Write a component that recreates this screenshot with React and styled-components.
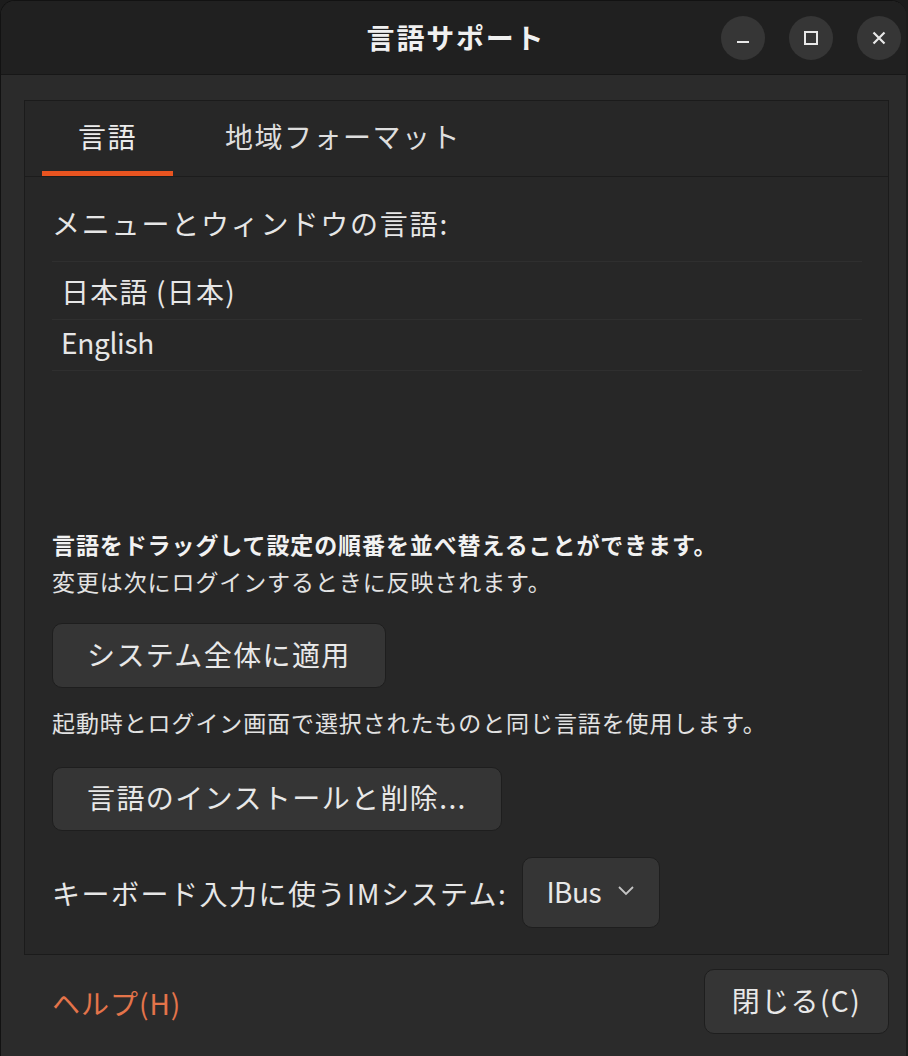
import styled, { createGlobalStyle } from "styled-components";

const GlobalStyle = createGlobalStyle`
  html, body {
    margin: 0;
    padding: 0;
    background: #1c1c1c;
  }
  body {
    font-family: "Noto Sans CJK JP", "Noto Sans", sans-serif;
    color: #e6e6e6;
  }
  * { box-sizing: border-box; }
`;

const Window = styled.div`
  width: 906px;
  height: 1056px;
  display: flex;
  flex-direction: column;
  background: #2b2b2b;
  border-top: 1px solid #121212;
  border-left: 1px solid #121212;
  border-radius: 15px 15px 0 0;
  overflow: hidden;
`;

const TitleBar = styled.div`
  height: 74px;
  flex: none;
  display: grid;
  grid-template-columns: 1fr auto 1fr;
  align-items: center;
  background: #202020;
  border-bottom: 1px solid #171717;
  padding-right: 5px;
`;

const Title = styled.div`
  grid-column: 2;
  font-size: 28px;
  font-weight: 700;
  letter-spacing: 1.8px;
  color: #f0f0f0;
  padding: 0 0 2px 10px;
`;

const Controls = styled.div`
  grid-column: 3;
  justify-self: end;
  display: flex;
  gap: 24px;
`;

const CircleButton = styled.button`
  width: 44px;
  height: 44px;
  border-radius: 50%;
  border: none;
  background: #363636;
  display: flex;
  align-items: center;
  justify-content: center;
  padding: 0;
  color: #e8e8e8;
`;

const Body = styled.div`
  flex: 1;
  display: flex;
  flex-direction: column;
  padding: 25px 17px 0 23px;
`;

const Frame = styled.div`
  height: 855px;
  display: flex;
  flex-direction: column;
  background: #272727;
  border: 1px solid #1b1b1b;
`;

const TabBar = styled.div`
  height: 76px;
  flex: none;
  display: flex;
  gap: 16px;
  padding-left: 17px;
  border-bottom: 1px solid #1c1c1c;
`;

const Tab = styled.div`
  position: relative;
  display: flex;
  align-items: center;
  padding: 0 36px 6px;
  font-size: 28px;
  letter-spacing: 1.5px;
  color: ${(p) => (p.$active ? "#ececec" : "#dedede")};

  &::after {
    content: "";
    position: absolute;
    left: 0;
    right: 0;
    bottom: 0;
    height: 5px;
    background: ${(p) => (p.$active ? "#e95420" : "transparent")};
  }
`;

const Content = styled.div`
  flex: 1;
  display: flex;
  flex-direction: column;
  padding: 0 26px 26px 27px;
`;

const Label = styled.div`
  font-size: 28px;
  letter-spacing: 1.8px;
  line-height: 34px;
  margin-top: 29px;
`;

const LangList = styled.div`
  margin-top: 21px;
  padding-top: 7px;
  border-top: 1px solid #2f2f2f;
`;

const LangRow = styled.div`
  height: 51px;
  display: flex;
  align-items: center;
  padding: 0 0 6px 9px;
  font-size: 28px;
  letter-spacing: ${(p) => (p.$latin ? "-0.3px" : "1.2px")};
  border-bottom: 1px solid #2f2f2f;
`;

const Lower = styled.div`
  margin-top: auto;
  display: flex;
  flex-direction: column;
  align-items: flex-start;
`;

const Note = styled.div`
  font-size: 23px;
  letter-spacing: 0.9px;
  line-height: 37px;
  margin-top: ${(p) => p.$mt || 0}px;
  font-weight: ${(p) => (p.$bold ? 700 : 400)};
  color: ${(p) => (p.$bold ? "#f2f2f2" : "#e2e2e2")};
`;

const Button = styled.button`
  font-family: inherit;
  font-size: 28px;
  letter-spacing: 1.4px;
  color: #e8e8e8;
  background: #353535;
  border: 1px solid #1e1e1e;
  border-radius: 10px;
  height: ${(p) => p.$h || 65}px;
  padding: 0 ${(p) => p.$px || 34}px 4px;
  margin-top: ${(p) => p.$mt || 0}px;
  display: flex;
  align-items: center;
`;

const ImRow = styled.div`
  margin-top: 26px;
  display: flex;
  align-items: center;
  gap: 15px;
  font-size: 28px;
  letter-spacing: 1.5px;
`;

const Dropdown = styled.button`
  font-family: inherit;
  width: 138px;
  height: 71px;
  display: flex;
  align-items: center;
  gap: 16px;
  padding: 0 0 4px 23px;
  font-size: 28px;
  letter-spacing: -0.5px;
  color: #e8e8e8;
  background: #353535;
  border: 1px solid #1e1e1e;
  border-radius: 10px;
`;

const Footer = styled.div`
  flex: 1;
  display: flex;
  justify-content: space-between;
  align-items: flex-start;
  padding: 14px 0 0 28px;
`;

const HelpLink = styled.div`
  font-size: 28px;
  letter-spacing: 1px;
  color: #e4744a;
  margin-top: 14px;
`;

export default function App() {
  return (
    <>
      <GlobalStyle />
      <Window>
        <TitleBar>
          <Title>言語サポート</Title>
          <Controls>
            <CircleButton aria-label="最小化">
              <svg width="16" height="16" viewBox="0 0 16 16">
                <path d="M2 12h12" stroke="currentColor" strokeWidth="2" />
              </svg>
            </CircleButton>
            <CircleButton aria-label="最大化">
              <svg width="16" height="16" viewBox="0 0 16 16">
                <rect x="2" y="2" width="12" height="12" fill="none" stroke="currentColor" strokeWidth="2" />
              </svg>
            </CircleButton>
            <CircleButton aria-label="閉じる">
              <svg width="16" height="16" viewBox="0 0 16 16">
                <path d="M2.5 2.5l11 11M13.5 2.5l-11 11" stroke="currentColor" strokeWidth="2.2" />
              </svg>
            </CircleButton>
          </Controls>
        </TitleBar>
        <Body>
          <Frame>
            <TabBar>
              <Tab $active>言語</Tab>
              <Tab>地域フォーマット</Tab>
            </TabBar>
            <Content>
              <Label>メニューとウィンドウの言語:</Label>
              <LangList>
                <LangRow>日本語 (日本)</LangRow>
                <LangRow $latin>English</LangRow>
              </LangList>
              <Lower>
                <Note $bold>言語をドラッグして設定の順番を並べ替えることができます。</Note>
                <Note>変更は次にログインするときに反映されます。</Note>
                <Button $mt={23}>システム全体に適用</Button>
                <Note $mt={16}>起動時とログイン画面で選択されたものと同じ言語を使用します。</Note>
                <Button $mt={26} $h={64}>言語のインストールと削除...</Button>
                <ImRow>
                  キーボード入力に使うIMシステム:
                  <Dropdown>
                    IBus
                    <svg width="18" height="11" viewBox="0 0 18 11">
                      <path d="M2 2l7 7 7-7" fill="none" stroke="#c4c4c4" strokeWidth="1.8" />
                    </svg>
                  </Dropdown>
                </ImRow>
              </Lower>
            </Content>
          </Frame>
          <Footer>
            <HelpLink>ヘルプ(H)</HelpLink>
            <Button $px={27}>閉じる(C)</Button>
          </Footer>
        </Body>
      </Window>
    </>
  );
}
